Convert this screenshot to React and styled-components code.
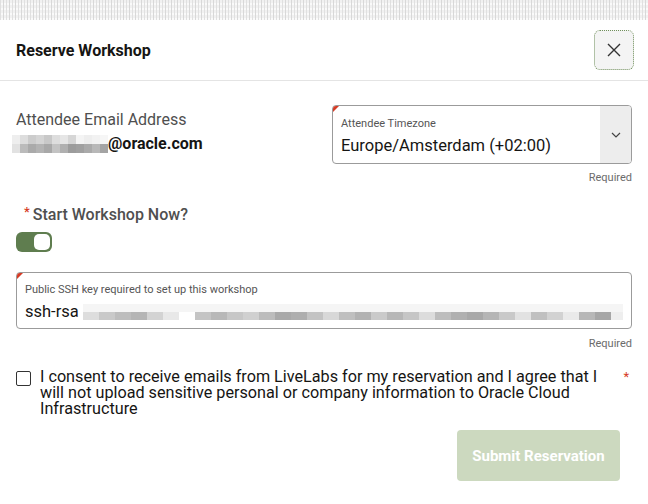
import React, { useState } from "react";
import styled, { createGlobalStyle } from "styled-components";

const GlobalStyle = createGlobalStyle`
  body {
    margin: 0;
    background: #fff;
    font-family: Roboto, "Liberation Sans", sans-serif;
    color: #161513;
  }
`;

// builds a hard-stop gradient that looks like a pixelated blur
const mosaic = (shades, cell) =>
  "linear-gradient(90deg," +
  shades
    .map((s, i) => `${s} ${i * cell}px ${(i + 1) * cell}px`)
    .join(",") +
  ")";

const emailTop = ["#eee", "#ddd", "#ccc", "#d4d4d4", "#c8c8c8", "#ddd", "#e6e6e6", "#d6d6d6", "#f4f4f4", "#eee", "#f2f2f2", "#f6f6f6"];
const emailBot = ["#e2e2e2", "#bbb", "#aaa", "#b3b3b3", "#a8a8a8", "#c3c3c3", "#b0b0b0", "#9c9c9c", "#a0a0a0", "#aaa", "#b8b8b8", "#a4a4a4"];
const sshShades = [
  "#ddd", "#c9c9c9", "#bdbdbd", "#b5b5b5", "#d3d3d3", "#e8e8e8", "#fff", "#c4c4c4", "#b8b8b8", "#c7c7c7",
  "#d0d0d0", "#bcbcbc", "#a9a9a9", "#aeaeae", "#c3c3c3", "#d8d8d8", "#bfbfbf", "#b2b2b2", "#cacaca", "#b7b7b7",
  "#c6c6c6", "#dcdcdc", "#bdbdbd", "#b0b0b0", "#a8a8a8", "#b5b5b5", "#c9c9c9", "#e2e2e2", "#c0c0c0", "#d2d2d2",
  "#eaeaea", "#b7b7b7", "#a6a6a6", "#eee",
];

const Backdrop = styled.div`
  height: 20px;
  background-color: #f1f1f1;
  background-image: repeating-linear-gradient(
      90deg,
      #e0e0e0 0 1px,
      transparent 1px 3px,
      #d8d8d8 3px 4px,
      transparent 4px 6px
    ),
    repeating-linear-gradient(0deg, #fafafa 0 2px, transparent 2px 5px);
`;

const Header = styled.div`
  height: 60px;
  display: flex;
  align-items: center;
  justify-content: space-between;
  padding: 0 14px 0 16px;
  border-bottom: 1px solid #e4e4e4;
`;

const Title = styled.h1`
  margin: 0;
  font-size: 16px;
  font-weight: 700;
  color: #161513;
`;

const CloseButton = styled.button`
  width: 40px;
  height: 40px;
  border: 1px dotted #6f8f5a;
  border-radius: 6px;
  background: #f4f4f4;
  display: flex;
  align-items: center;
  justify-content: center;
  padding: 0;
  color: #333;
`;

const Body = styled.div`
  padding: 24px 16px 0 16px;
`;

const TopRow = styled.div`
  display: grid;
  grid-template-columns: 1fr 300px;
  column-gap: 20px;
`;

const EmailBlock = styled.div`
  padding-top: 5px;
`;

const FieldLabel = styled.div`
  font-size: 16px;
  color: #4f4f4f;
  line-height: 20px;
`;

const EmailValue = styled.div`
  display: flex;
  align-items: center;
  margin-top: 4px;
  margin-left: -4px;
  font-size: 16px;
  font-weight: 700;
  line-height: 20px;
`;

const Blur = styled.span`
  display: inline-flex;
  flex-direction: column;
  width: ${(p) => p.$w}px;
  height: ${(p) => p.$h}px;
  span {
    flex: 1;
  }
`;

const FieldBox = styled.div`
  position: relative;
  display: flex;
  height: 57px;
  border: 1px solid #9b9b9b;
  border-radius: 4px;
  overflow: hidden;
  &::before {
    content: "";
    position: absolute;
    top: 0;
    left: 0;
    border-top: 6px solid #d63b25;
    border-right: 6px solid transparent;
  }
`;

const FieldInner = styled.div`
  flex: 1;
  padding: 11px 8px 0 8px;
  min-width: 0;
`;

const SmallLabel = styled.div`
  font-size: 11px;
  color: #555;
  line-height: 14px;
`;

const FieldValue = styled.div`
  display: flex;
  align-items: center;
  font-size: 16.5px;
  line-height: 24px;
  margin-top: 3px;
  color: #161513;
  white-space: nowrap;
`;

const DropButton = styled.div`
  width: 31px;
  background: #ededed;
  display: flex;
  align-items: center;
  justify-content: center;
  color: #444;
`;

const Required = styled.div`
  text-align: right;
  font-size: 11px;
  color: #6b6b6b;
  line-height: 14px;
  margin-top: ${(p) => p.$mt || 7}px;
`;

const ToggleLabel = styled.div`
  margin-top: 20px;
  display: flex;
  align-items: flex-start;
  font-size: 16px;
  font-weight: 500;
  color: #4f4f4f;
  line-height: 20px;
`;

const Star = styled.span`
  color: #d63b25;
  font-size: 13px;
  line-height: 14px;
  margin: 0 3px 0 8px;
`;

const Switch = styled.button`
  margin-top: 7px;
  width: 36px;
  height: 20px;
  border-radius: 6px;
  border: none;
  padding: 2px;
  background: ${(p) => (p.$on ? "#5f7d4f" : "#bbb")};
  display: flex;
  justify-content: ${(p) => (p.$on ? "flex-end" : "flex-start")};
  span {
    width: 16px;
    height: 16px;
    border-radius: 5px;
    background: #fff;
  }
`;

const SshBox = styled(FieldBox)`
  margin-top: 20px;
  height: 55px;
`;

const SshInner = styled(FieldInner)`
  padding-top: 10px;
`;

const ConsentRow = styled.label`
  margin-top: 18px;
  display: flex;
  align-items: flex-start;
  gap: 9px;
`;

const Box = styled.span`
  flex: none;
  width: 13px;
  height: 13px;
  border: 1px solid #333;
  border-radius: 2px;
  margin-top: 2px;
`;

const ConsentText = styled.span`
  flex: 1;
  font-size: 16.2px;
  line-height: 16px;
  color: #161513;
  padding-right: 8px;
`;

const ConsentStar = styled.span`
  color: #d63b25;
  font-size: 13px;
  margin-right: 3px;
`;

const Footer = styled.div`
  display: flex;
  justify-content: flex-end;
  padding-right: 12px;
  margin-top: 13px;
`;

const SubmitButton = styled.button`
  width: 163px;
  height: 51px;
  border: none;
  border-radius: 4px;
  background: #ccd9bf;
  color: #fff;
  font-family: inherit;
  font-size: 15px;
  font-weight: 700;
`;

const Mosaic = ({ rows, w, h, cell }) => (
  <Blur $w={w} $h={h}>
    {rows.map((r, i) => (
      <span key={i} style={{ background: mosaic(r, cell) }} />
    ))}
  </Blur>
);

export default function App() {
  const [on, setOn] = useState(true);
  return (
    <>
      <GlobalStyle />
      <Backdrop />
      <Header>
        <Title>Reserve Workshop</Title>
        <CloseButton aria-label="Close">
          <svg width="16" height="16" viewBox="0 0 16 16" fill="none" stroke="currentColor" strokeWidth="1.4">
            <path d="M2 2 L14 14 M14 2 L2 14" />
          </svg>
        </CloseButton>
      </Header>
      <Body>
        <TopRow>
          <EmailBlock>
            <FieldLabel>Attendee Email Address</FieldLabel>
            <EmailValue>
              <Mosaic rows={[emailTop, emailBot]} w={96} h={18} cell={8} />
              @oracle.com
            </EmailValue>
          </EmailBlock>
          <div>
            <FieldBox>
              <FieldInner>
                <SmallLabel>Attendee Timezone</SmallLabel>
                <FieldValue>Europe/Amsterdam (+02:00)</FieldValue>
              </FieldInner>
              <DropButton>
                <svg width="12" height="8" viewBox="0 0 12 8" fill="none" stroke="currentColor" strokeWidth="1.2">
                  <path d="M2 2 L6 6 L10 2" />
                </svg>
              </DropButton>
            </FieldBox>
            <Required>Required</Required>
          </div>
        </TopRow>

        <ToggleLabel>
          <Star>*</Star>Start Workshop Now?
        </ToggleLabel>
        <Switch $on={on} onClick={() => setOn(!on)} aria-label="Start Workshop Now?">
          <span />
        </Switch>

        <SshBox>
          <SshInner>
            <SmallLabel>Public SSH key required to set up this workshop</SmallLabel>
            <FieldValue>
              ssh-rsa&nbsp;
              <Mosaic rows={[sshShades.map(() => "#f5f5f5"), sshShades]} w={548} h={16} cell={16} />
            </FieldValue>
          </SshInner>
        </SshBox>
        <Required $mt={8}>Required</Required>

        <ConsentRow>
          <Box />
          <ConsentText>
            I consent to receive emails from LiveLabs for my reservation and I agree that I will not
            upload sensitive personal or company information to Oracle Cloud Infrastructure
          </ConsentText>
          <ConsentStar>*</ConsentStar>
        </ConsentRow>

        <Footer>
          <SubmitButton disabled>Submit Reservation</SubmitButton>
        </Footer>
      </Body>
    </>
  );
}
